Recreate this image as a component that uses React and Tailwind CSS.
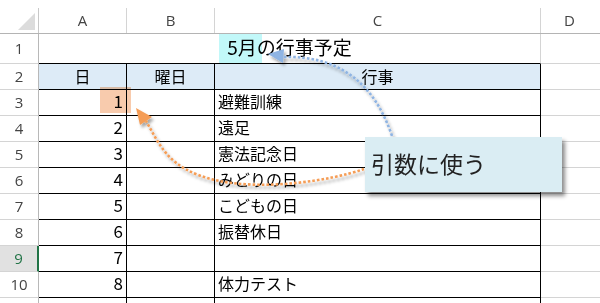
import React from "react";

const jp = { fontFamily: '"Noto Sans CJK JP", "Noto Sans", sans-serif' };
const ui = { fontFamily: '"Open Sans", "Noto Sans", sans-serif' };

const rows = [
  { n: 3, day: "1", event: "避難訓練" },
  { n: 4, day: "2", event: "遠足" },
  { n: 5, day: "3", event: "憲法記念日" },
  { n: 6, day: "4", event: "みどりの日" },
  { n: 7, day: "5", event: "こどもの日" },
  { n: 8, day: "6", event: "振替休日" },
  { n: 9, day: "7", event: "", selected: true },
  { n: 10, day: "8", event: "体力テスト" },
  { n: 11, day: "9", event: "" },
];

function RowHead({ n, selected }) {
  return selected ? (
    <div
      className="w-[39px] shrink-0 flex items-center justify-center bg-[#e1e1e1] text-[#217346] text-[15px] border-r-2 border-r-[#217346] border-b border-b-[#d4d4d4]"
      style={ui}
    >
      {n}
    </div>
  ) : (
    <div
      className="w-[39px] shrink-0 flex items-center justify-center text-[#444] text-[15px] border-r border-r-[#b8b8b8] border-b border-b-[#d4d4d4]"
      style={ui}
    >
      {n}
    </div>
  );
}

export default function App() {
  return (
    <div className="relative w-[600px] h-[303px] overflow-hidden bg-white text-black">
      <div className="h-2" />

      {/* column letters */}
      <div className="flex h-[26px] border-b border-[#b4b4b4] text-[#444] text-[15px]" style={ui}>
        <div className="w-[39px] shrink-0 border-r border-[#c8c8c8] flex items-end justify-end pb-[2px] pr-[2px]">
          <svg width="18" height="18" viewBox="0 0 18 18">
            <polygon points="17,0 17,17 0,17" fill="#dcdcdc" />
          </svg>
        </div>
        <div className="w-[88px] shrink-0 border-r border-[#d4d4d4] flex items-center justify-center">A</div>
        <div className="w-[88px] shrink-0 border-r border-[#d4d4d4] flex items-center justify-center">B</div>
        <div className="w-[326px] shrink-0 border-r border-[#d4d4d4] flex items-center justify-center">C</div>
        <div className="flex-1 flex items-center justify-center pr-[2px]">D</div>
      </div>

      {/* row 1: merged title */}
      <div className="flex h-[30px]">
        <RowHead n={1} />
        <div
          className="w-[502px] shrink-0 border-r border-r-[#d4d4d4] border-b border-b-black flex items-center justify-center text-[19px] pb-[3px]"
          style={jp}
        >
          5月の行事予定
        </div>
        <div className="flex-1 border-b border-[#d4d4d4]" />
      </div>

      {/* row 2: table header */}
      <div className="flex h-[26px] text-[16px]" style={jp}>
        <RowHead n={2} />
        <div className="w-[88px] shrink-0 bg-[#ddebf7] border-r border-b border-black flex items-center justify-center pb-[2px]">日</div>
        <div className="w-[88px] shrink-0 bg-[#ddebf7] border-r border-b border-black flex items-center justify-center pb-[2px]">曜日</div>
        <div className="w-[326px] shrink-0 bg-[#ddebf7] border-r border-b border-black flex items-center justify-center pb-[2px]">行事</div>
        <div className="flex-1 border-b border-[#d4d4d4]" />
      </div>

      {rows.map((r) => (
        <div key={r.n} className="flex h-[26px] text-[16px]" style={jp}>
          <RowHead n={r.n} selected={r.selected} />
          <div className="w-[88px] shrink-0 border-r border-b border-black flex items-center justify-end pr-[3px] pb-[3px] text-[17px]">
            {r.day}
          </div>
          <div className="w-[88px] shrink-0 border-r border-b border-black" />
          <div className="w-[326px] shrink-0 border-r border-b border-black flex items-center pl-[3px] pb-[3px]">
            {r.event}
          </div>
          <div className="flex-1 border-b border-[#d4d4d4]" />
        </div>
      ))}

      {/* cell highlights */}
      <div className="absolute left-[219px] top-[34px] w-[43px] h-[29px] bg-[#c2f8f9] mix-blend-multiply" />
      <div className="absolute left-[100px] top-[87px] w-[31px] h-[26px] bg-[#f8cbad] mix-blend-multiply" />

      {/* connector arrows */}
      <svg className="absolute inset-0 pointer-events-none" width="600" height="303" viewBox="0 0 600 303">
        <defs>
          <filter id="soft" x="-20%" y="-20%" width="140%" height="140%">
            <feDropShadow dx="2" dy="3" stdDeviation="1.6" floodColor="#000" floodOpacity="0.35" />
          </filter>
        </defs>
        <g filter="url(#soft)">
          <path
            d="M 392 136 Q 365 55 284 57"
            fill="none"
            stroke="#8fb4e3"
            strokeWidth="2.6"
            strokeDasharray="2.6 2"
          />
          <polygon points="268,54 284,49 283,63" fill="#8fb4e3" />
        </g>
        <g filter="url(#soft)">
          <path
            d="M 364 169 C 330 181, 262 191, 215 180 S 160 145, 146 121"
            fill="none"
            stroke="#f59d56"
            strokeWidth="2.6"
            strokeDasharray="2.6 2"
          />
          <polygon points="136,108 152,117 140,125" fill="#f59d56" />
        </g>
      </svg>

      {/* callout */}
      <div
        className="absolute left-[365px] top-[137px] w-[197px] h-[55px] bg-[#daedf3] shadow-[3px_4px_4px_rgba(0,0,0,0.45)] flex items-center pl-[6px] pb-[2px] text-[23px] text-[#222]"
        style={jp}
      >
        引数に使う
      </div>
    </div>
  );
}
